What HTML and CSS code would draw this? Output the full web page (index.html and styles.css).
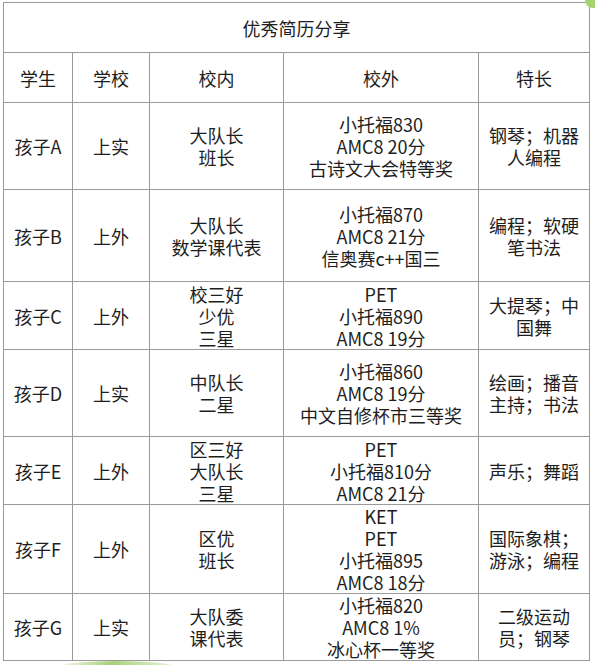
FILE: index.html
```html
<!DOCTYPE html>
<html lang="zh-CN">
<head>
<meta charset="utf-8">
<title>优秀简历分享</title>
<link rel="stylesheet" href="styles.css">
</head>
<body>
<div class="page">
  <table class="resume">
    <colgroup>
      <col class="c1"><col class="c2"><col class="c3"><col class="c4"><col class="c5">
    </colgroup>
    <tr class="r-title"><td colspan="5">优秀简历分享</td></tr>
    <tr class="r-head"><td>学生</td><td>学校</td><td>校内</td><td>校外</td><td>特长</td></tr>
    <tr class="r-a"><td>孩子A</td><td>上实</td><td>大队长<br>班长</td><td>小托福830<br>AMC8 20分<br>古诗文大会特等奖</td><td>钢琴；机器人编程</td></tr>
    <tr class="r-b"><td>孩子B</td><td>上外</td><td>大队长<br>数学课代表</td><td>小托福870<br>AMC8 21分<br>信奥赛c++国三</td><td>编程；软硬笔书法</td></tr>
    <tr class="r-c"><td>孩子C</td><td>上外</td><td>校三好<br>少优<br>三星</td><td>PET<br>小托福890<br>AMC8 19分</td><td>大提琴；中国舞</td></tr>
    <tr class="r-d"><td>孩子D</td><td>上实</td><td>中队长<br>二星</td><td>小托福860<br>AMC8 19分<br>中文自修杯市三等奖</td><td>绘画；播音主持；书法</td></tr>
    <tr class="r-e"><td>孩子E</td><td>上外</td><td>区三好<br>大队长<br>三星</td><td>PET<br>小托福810分<br>AMC8 21分</td><td>声乐；舞蹈</td></tr>
    <tr class="r-f"><td>孩子F</td><td>上外</td><td>区优<br>班长</td><td>KET<br>PET<br>小托福895<br>AMC8 18分</td><td>国际象棋；游泳；编程</td></tr>
    <tr class="r-g"><td>孩子G</td><td>上实</td><td>大队委<br>课代表</td><td>小托福820<br>AMC8 1%<br>冰心杯一等奖</td><td>二级运动员；钢琴</td></tr>
  </table>
  <div class="deco deco-top"></div>
  <div class="deco deco-bottom"></div>
</div>
</body>
</html>
```
FILE: styles.css
```css
html, body {
  margin: 0;
  padding: 0;
  background: #ffffff;
}
.page {
  position: relative;
  width: 595px;
  height: 665px;
  overflow: hidden;
  padding: 2px 0 0 3px;
  box-sizing: border-box;
  font-family: "Noto Sans CJK SC", "Noto Sans", sans-serif;
  color: #1e1e1e;
}
.resume {
  table-layout: fixed;
  border-collapse: separate;
  border-spacing: 0;
  width: 587px;
  border-top: 1px solid #9a9a9a;
  border-left: 1px solid #9a9a9a;
  font-size: 18px;
  line-height: 22px;
}
.resume td {
  box-sizing: border-box;
  border-right: 1px solid #9a9a9a;
  border-bottom: 1px solid #9a9a9a;
  padding: 0 8px;
  text-align: center;
  vertical-align: middle;
}
.c1 { width: 69px; }
.c2 { width: 77px; }
.c3 { width: 134px; }
.c4 { width: 195px; }
.c5 { width: 111px; }
.r-title td { height: 50px; }
.r-head td { height: 50px; }
.r-a td { height: 87px; }
.r-b td { height: 92px; }
.r-c td { height: 68px; }
.r-d td { height: 87px; }
.r-e td { height: 68px; }
.r-f td { height: 89px; }
.r-g td { height: 67px; }
.deco {
  position: absolute;
}
.deco-top {
  right: -6px;
  top: -8px;
  width: 16px;
  height: 16px;
  border-radius: 50%;
  background: #a6d36f;
}
.deco-bottom {
  left: 62px;
  top: 661px;
  width: 110px;
  height: 10px;
  border-radius: 50% 50% 0 0;
  background: linear-gradient(90deg, rgba(170,210,120,0.2), #a9d27a 45%, rgba(170,210,120,0.3));
}
```
